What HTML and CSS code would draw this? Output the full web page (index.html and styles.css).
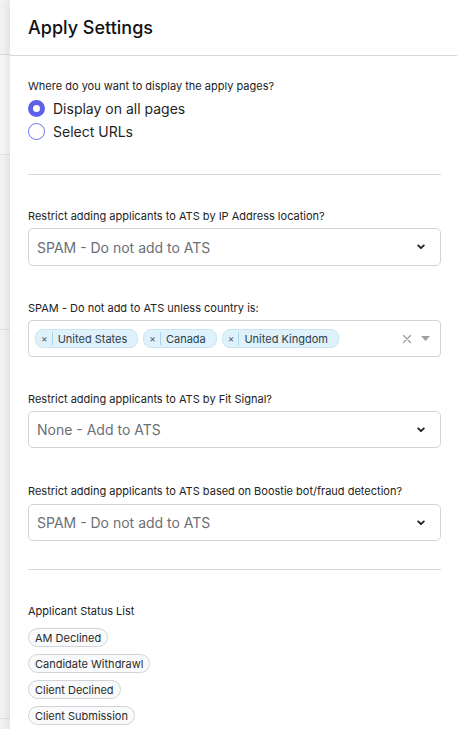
FILE: index.html
```html
<!DOCTYPE html>
<html lang="en">
<head>
<meta charset="utf-8">
<title>Apply Settings</title>
<link rel="stylesheet" href="styles.css">
</head>
<body>
<div class="backdrop">
  <div class="bd-row bd-a"></div>
  <div class="bd-row bd-b"></div>
  <div class="bd-row bd-c"></div>
  <div class="bd-row bd-d"></div>
  <div class="bd-row bd-e"></div>
</div>
<div class="panel">
  <header class="panel-header">
    <h1 class="title">Apply Settings</h1>
  </header>
  <div class="content">
    <div class="section first">
      <div class="label">Where do you want to display the apply pages?</div>
      <label class="radio-row">
        <span class="radio checked"></span>
        <span class="radio-text">Display on all pages</span>
      </label>
      <label class="radio-row">
        <span class="radio"></span>
        <span class="radio-text">Select URLs</span>
      </label>
    </div>
    <hr class="divider d1">

    <div class="field f1">
      <div class="label">Restrict adding applicants to ATS by IP Address location?</div>
      <div class="select h38">
        <span class="select-value">SPAM - Do not add to ATS</span>
        <svg class="chev" width="8" height="6" viewBox="0 0 8 6"><path d="M1.2 1.4 L4 4.2 L6.8 1.4" fill="none" stroke="#222" stroke-width="1.9" stroke-linecap="round" stroke-linejoin="round"/></svg>
      </div>
    </div>

    <div class="field">
      <div class="label">SPAM - Do not add to ATS unless country is:</div>
      <div class="multi">
        <div class="tags">
          <span class="tag"><span class="tag-x">×</span><span class="tag-text">United States</span></span>
          <span class="tag"><span class="tag-x">×</span><span class="tag-text">Canada</span></span>
          <span class="tag"><span class="tag-x">×</span><span class="tag-text">United Kingdom</span></span>
        </div>
        <div class="multi-controls">
          <svg class="clear" width="10" height="10" viewBox="0 0 10 10"><path d="M1.5 1.5 L8.5 8.5 M8.5 1.5 L1.5 8.5" stroke="#9a9a9a" stroke-width="1.2" stroke-linecap="round"/></svg>
          <svg class="caret" width="9" height="5" viewBox="0 0 9 5"><path d="M0 0 L9 0 L4.5 5 Z" fill="#a0a0a0"/></svg>
        </div>
      </div>
    </div>

    <div class="field">
      <div class="label">Restrict adding applicants to ATS by Fit Signal?</div>
      <div class="select">
        <span class="select-value">None - Add to ATS</span>
        <svg class="chev" width="8" height="6" viewBox="0 0 8 6"><path d="M1.2 1.4 L4 4.2 L6.8 1.4" fill="none" stroke="#222" stroke-width="1.9" stroke-linecap="round" stroke-linejoin="round"/></svg>
      </div>
    </div>

    <div class="field f4">
      <div class="label">Restrict adding applicants to ATS based on Boostie bot/fraud detection?</div>
      <div class="select">
        <span class="select-value">SPAM - Do not add to ATS</span>
        <svg class="chev" width="8" height="6" viewBox="0 0 8 6"><path d="M1.2 1.4 L4 4.2 L6.8 1.4" fill="none" stroke="#222" stroke-width="1.9" stroke-linecap="round" stroke-linejoin="round"/></svg>
      </div>
    </div>
    <hr class="divider d2">

    <div class="status">
      <div class="label">Applicant Status List</div>
      <div class="pills">
        <span class="pill">AM Declined</span>
        <span class="pill">Candidate Withdrawl</span>
        <span class="pill">Client Declined</span>
        <span class="pill">Client Submission</span>
      </div>
    </div>
  </div>
</div>
</body>
</html>
```

FILE: styles.css
```css
* { box-sizing: border-box; }
html, body { margin: 0; padding: 0; height: 100%; }
body {
  display: flex;
  font-family: Inter, "Noto Sans", "Liberation Sans", sans-serif;
  color: #1f2328;
  background: #f4f4f5;
  overflow: hidden;
}
.backdrop {
  width: 10px;
  flex: 0 0 10px;
  display: flex;
  flex-direction: column;
  background: #f3f3f4;
}
.bd-row { border-bottom: 1px solid #dcdcdf; }
.bd-a { height: 55px; }
.bd-b { height: 100px; border-bottom-color: #e4e4e6; background: #f6f6f7; }
.bd-c { height: 175px; border-bottom-color: #e2e2e4; }
.bd-d { height: 388px; border-bottom: none; }
.bd-e { height: 10px; border-top: 1px solid #e2e2e4; border-bottom: none; }

.panel {
  flex: 1;
  background: #fff;
  box-shadow: -3px 0 8px rgba(0, 0, 0, 0.08);
  display: flex;
  flex-direction: column;
}
.panel-header {
  height: 56px;
  border-bottom: 1px solid #d9d9dc;
  display: flex;
  align-items: center;
  padding-left: 18px;
}
.title {
  margin: 0;
  font-size: 18px;
  font-weight: 500;
  color: #111;
}
.content {
  padding: 0 16px 0 18px;
}
.label {
  font-size: 11px;
  line-height: 14px;
  color: #222;
}
.section.first { padding-top: 23px; }
.radio-row {
  display: flex;
  align-items: center;
  height: 23px;
  gap: 8px;
}
.section.first .label { margin-bottom: 4px; }
.radio {
  width: 17px;
  height: 17px;
  border-radius: 50%;
  border: 1px solid #6b6ff0;
  background: #fff;
  flex: 0 0 17px;
}
.radio.checked {
  border: 5px solid #5c63e8;
  background: #fff;
}
.radio-text {
  font-size: 14px;
  color: #1f1f1f;
}
.divider {
  border: none;
  border-top: 1px solid #d6d6da;
  margin: 0;
}
.d1 { margin-top: 31px; }
.d2 { margin-top: 28px; }

.field { margin-top: 35px; }
.field.f1 { margin-top: 34px; }
.field .label { margin-bottom: 5px; }
.field.f4 { margin-top: 36px; }
.field.f4 .label { margin-bottom: 6px; }

.select {
  height: 37px;
  border: 1px solid #d4d4d8;
  border-radius: 5px;
  display: flex;
  align-items: center;
  justify-content: space-between;
  padding: 0 15px 0 8px;
}
.select.h38 { height: 38px; }
.select-value {
  font-size: 14px;
  color: #6b6f76;
}
.chev { display: block; }

.multi {
  height: 37px;
  border: 1px solid #d4d4d8;
  border-radius: 4px;
  display: flex;
  align-items: center;
  justify-content: space-between;
  padding: 0 10px 0 6px;
}
.tags { display: flex; gap: 5px; }
.tag {
  display: flex;
  align-items: center;
  height: 19px;
  background: #dff1fa;
  border: 1px solid #c9e6f4;
  border-radius: 8px;
  padding: 0 10px 0 5px;
  font-size: 11px;
  color: #2c3e4c;
}
.tag-x {
  font-size: 10px;
  color: #4a6070;
  padding-right: 4px;
  border-right: 1px solid #a9d3e8;
  line-height: 13px;
  margin-right: 5px;
}
.multi-controls {
  display: flex;
  align-items: center;
  gap: 9px;
}
.clear, .caret { display: block; }

.status { margin-top: 34px; }
.status .label { margin-bottom: 10px; }
.pills {
  display: flex;
  flex-direction: column;
  align-items: flex-start;
  gap: 7px;
}
.pill {
  height: 19px;
  display: flex;
  align-items: center;
  padding: 0 6px;
  border: 1px solid #d4d4d8;
  border-radius: 10px;
  background: #f9fafb;
  font-size: 11px;
  color: #2a2a2a;
}
```
